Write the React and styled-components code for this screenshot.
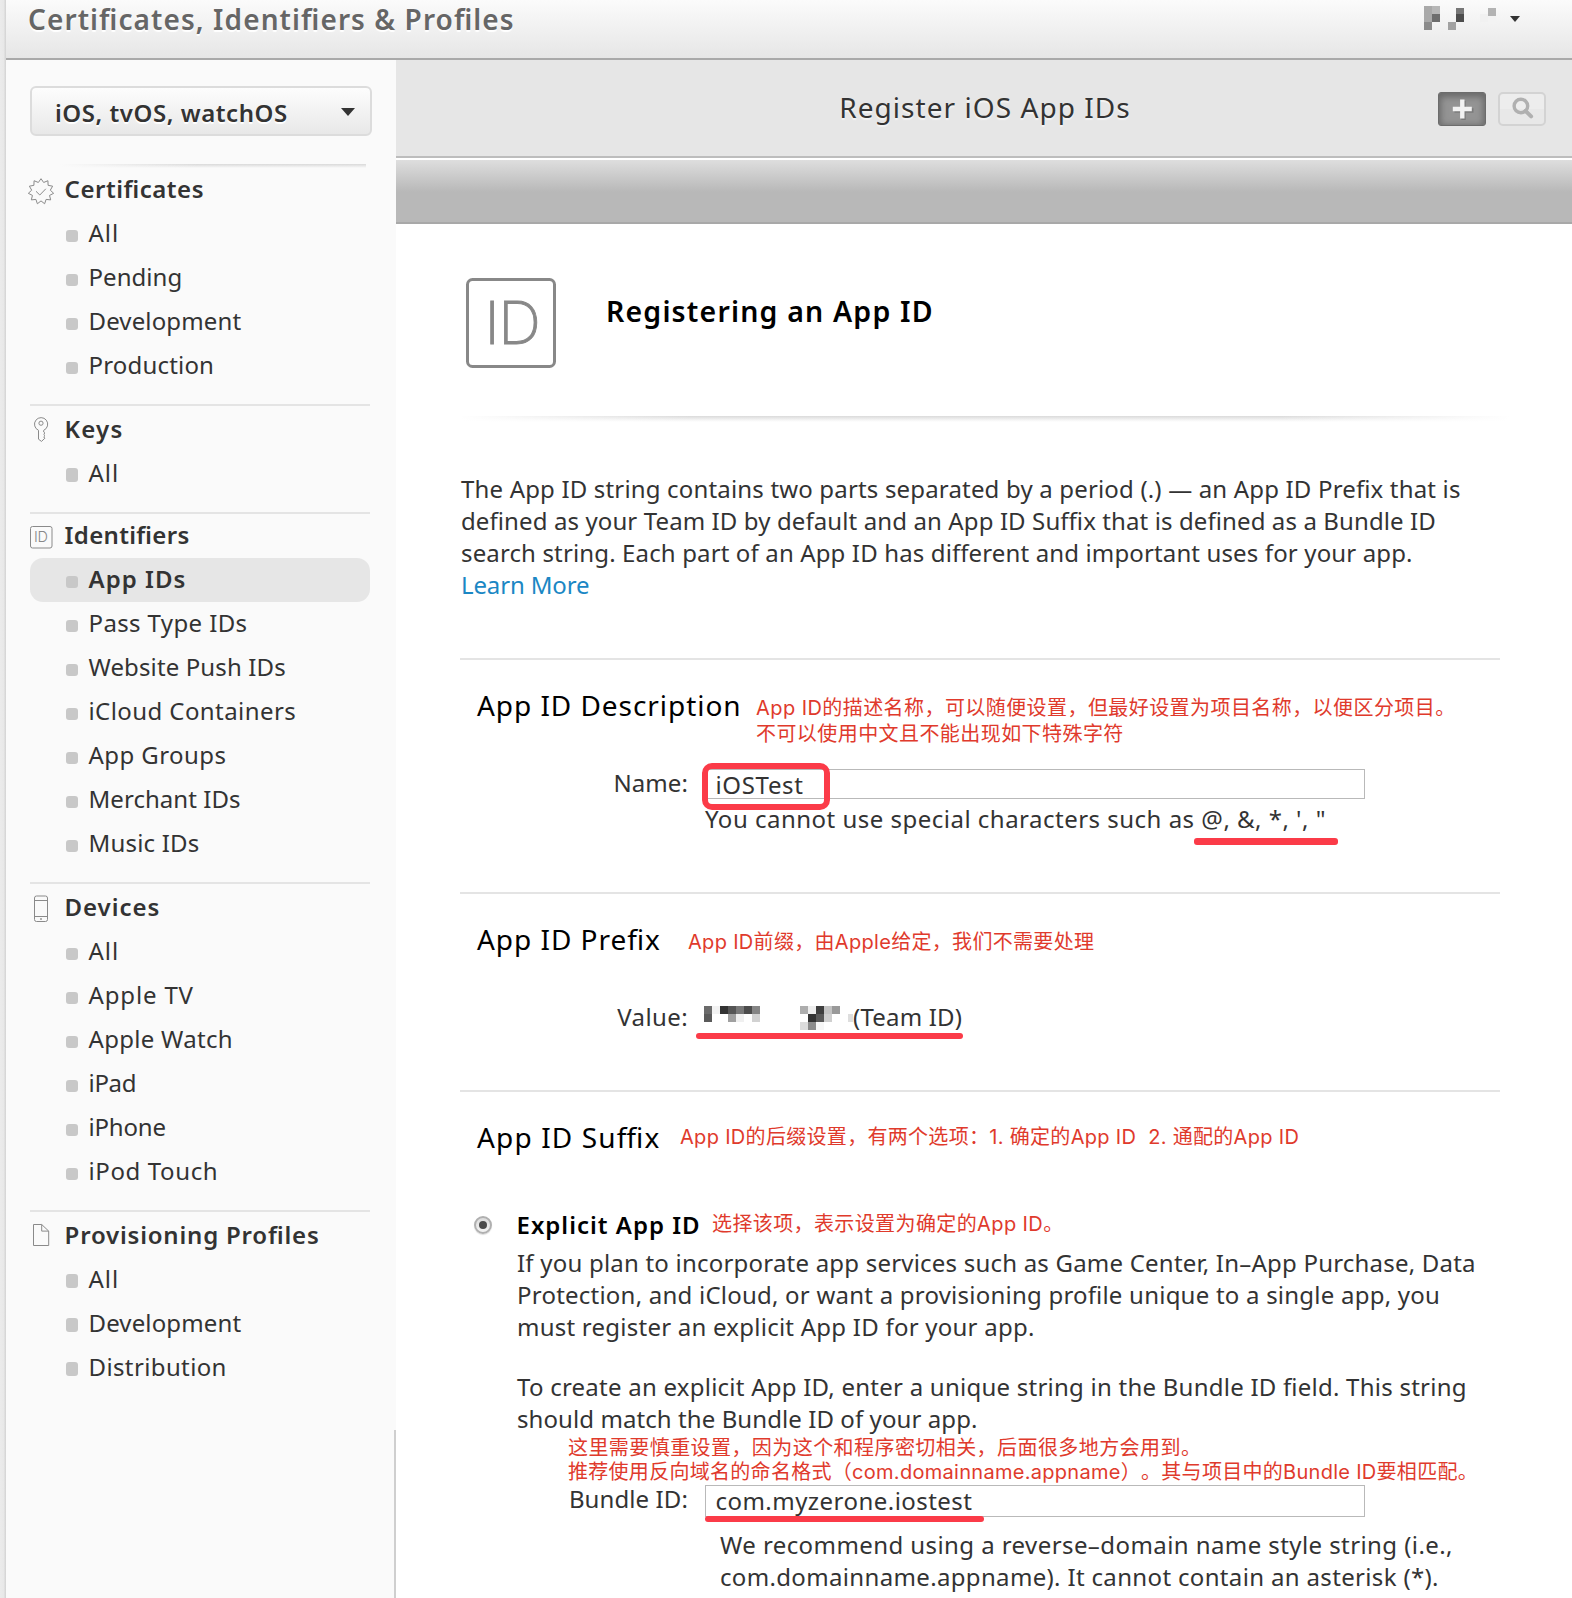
import React from 'react';
import styled, { createGlobalStyle } from 'styled-components';

const GlobalStyle = createGlobalStyle`
  *, *::before, *::after { box-sizing: border-box; }
  body {
    margin: 0;
    background: #fff;
    color: #333;
    font-family: "Noto Sans", "Open Sans", "Noto Sans CJK SC", sans-serif;
    font-size: 24px;
    font-feature-settings: "liga" 1;
  }
  h1, h2, h3, p, ul { margin: 0; padding: 0; font-weight: 400; }
  ul { list-style: none; }
`;

/* ---------- page frame ---------- */

const Page = styled.div`
  display: flex;
  height: 1598px;
  overflow: hidden;
`;

const PageEdge = styled.div`
  flex: 0 0 6px;
  background: linear-gradient(to right, #ebebeb 0, #e8e8e8 60%, #d2d2d2 100%);
`;

const Window = styled.div`
  flex: 1;
  min-width: 0;
  display: flex;
  flex-direction: column;
`;

const TopBar = styled.header`
  display: flex;
  justify-content: space-between;
  height: 60px;
  padding: 0 52px 0 22px;
  border-bottom: 2px solid #a9a9a9;
  background: linear-gradient(#fbfbfb, #e6e6e6);
`;

const TopTitle = styled.h1`
  font-size: 28px;
  font-weight: 600;
  line-height: 38px;
  letter-spacing: 1.08px;
  color: #666;
  text-shadow: 0 2px 1px #fff;
  white-space: nowrap;
`;

const Account = styled.div`
  display: flex;
  gap: 14px;
  padding-top: 6px;
`;

const AccountArrow = styled.svg`
  margin-top: 10px;
`;

const Body = styled.div`
  flex: 1;
  min-height: 0;
  display: flex;
`;

/* ---------- sidebar ---------- */

const Sidebar = styled.aside`
  flex: 0 0 390px;
  display: flex;
  flex-direction: column;
  background: #fafafa;
`;

const SidebarNav = styled.nav`
  height: 1370px;
  padding: 26px 24px 0;
`;

const SidebarTail = styled.div`
  flex: 1;
  border-right: 2px solid #cfcfcf;
`;

const PlatformSelect = styled.div`
  display: flex;
  justify-content: space-between;
  align-items: flex-start;
  height: 50px;
  padding: 0 15px 0 23px;
  border: 2px solid #dcdcdc;
  border-radius: 6px;
  background: linear-gradient(#fdfdfd, #e8e8e8);
  font-weight: 600;
  line-height: 49px;
  letter-spacing: 0.55px;
  text-shadow: 0 2px 1px #fff;
`;

const SelectArrow = styled.svg`
  margin-top: 20px;
`;

const FadeRule = styled.div`
  height: 4px;
  margin: 28px 6px 0 30px;
  background: linear-gradient(to right, #fafafa, rgba(250, 250, 250, 0) 45%),
    linear-gradient(#d9d9d9, #fafafa);
`;

const NavSection = styled.section`
  width: 340px;
  padding-top: ${(p) => p.$top}px;
  padding-bottom: 16px;
  border-top: ${(p) => (p.$ruled ? '2px solid #e4e4e4' : 'none')};
`;

const NavHeading = styled.h2`
  display: flex;
  align-items: flex-start;
  height: 44px;
  margin-left: -3px;
  font-size: 24px;
  font-weight: 600;
  line-height: 41px;
  letter-spacing: ${(p) => p.$track}px;
  white-space: nowrap;
`;

const NavIcon = styled.span`
  display: flex;
  flex: 0 0 37.6px;
  height: 28px;
  margin-top: 9px;
`;

const NavItem = styled.li`
  display: flex;
  align-items: flex-start;
  height: 44px;
  padding-left: 36px;
  border-radius: 13px;
  background: ${(p) => (p.$active ? '#e6e6e6' : 'transparent')};
  font-weight: ${(p) => (p.$active ? 600 : 400)};
  line-height: 41px;
  letter-spacing: ${(p) => p.$track}px;
  white-space: nowrap;
`;

const Bullet = styled.span`
  flex: 0 0 12px;
  height: ${(p) => (p.$tall ? 14 : 12)}px;
  margin: ${(p) => (p.$tall ? 16 : 18)}px 10.5px 0 0;
  border-radius: 3px;
  background: #c8c8c8;
`;

/* ---------- main column ---------- */

const Main = styled.main`
  flex: 1;
  min-width: 0;
`;

const SubHeader = styled.div`
  display: grid;
  grid-template-columns: 1fr auto 1fr;
  height: 98px;
  padding: 0 26px;
  border-bottom: 2px solid #bdbdbd;
  background: #e6e6e6;
`;

const SubTitle = styled.h2`
  grid-column: 2;
  padding-left: 2px;
  font-size: 28px;
  line-height: 94px;
  letter-spacing: 1.05px;
  text-shadow: 0 2px 1px #f4f4f4;
`;

const Tools = styled.div`
  display: flex;
  justify-content: flex-end;
  gap: 12px;
  padding-top: 32px;
`;

const ToolButton = styled.span`
  display: flex;
  width: 48px;
  height: 34px;
  border-radius: ${(p) => (p.$pressed ? 3 : 5)}px;
  border: ${(p) => (p.$pressed ? '1px solid #6c6c6c' : '2px solid #d3d3d3')};
  background: ${(p) =>
    p.$pressed ? '#949494' : 'linear-gradient(#ededed 50%, #e8e8e8 50%)'};
  box-shadow: ${(p) => (p.$pressed ? 'inset 0 2px 6px 2px #6a6a6a' : 'none')};
`;

const Band = styled.div`
  height: 66px;
  border-top: 2px solid #fff;
  border-bottom: 2px solid #a8a8a8;
  background: linear-gradient(#dedede 0, #b8b8b8 32px);
`;

const Content = styled.div`
  width: 1104px;
  padding: 54px 0 0 64px;
`;

const Hero = styled.div`
  display: flex;
  gap: 50px;
  padding-left: 6px;
`;

const HeroTitle = styled.h3`
  margin-top: 13px;
  color: #000;
  font-size: 28.5px;
  font-weight: 600;
  line-height: 40px;
  letter-spacing: 1.18px;
`;

const HeroShadow = styled.div`
  height: 6px;
  margin: 48px -10px 0 0;
  background: linear-gradient(to right, #fff, rgba(255, 255, 255, 0) 22%, rgba(255, 255, 255, 0) 78%, #fff),
    linear-gradient(#dadada, #f6f6f6 70%, #fff);
`;

const Paragraph = styled.p`
  margin-top: ${(p) => p.$top}px;
  padding-left: ${(p) => p.$indent || 0}px;
  line-height: 32px;
`;

const Line = styled.span`
  display: block;
  letter-spacing: ${(p) => p.$track}px;
  white-space: nowrap;
`;

const LinkLine = styled(Line)`
  color: #1b87c4;
`;

const Section = styled.section`
  margin-top: ${(p) => p.$top || 0}px;
  padding: 25px 0 ${(p) => p.$bottom || 0}px;
  border-top: 2px solid #e4e4e4;
`;

const SectionHead = styled.div`
  display: flex;
  align-items: flex-start;
  padding-left: 17px;
`;

const SectionTitle = styled.h3`
  flex: 0 0 ${(p) => p.$width}px;
  color: #000;
  font-size: 28px;
  line-height: 40px;
  letter-spacing: ${(p) => p.$track}px;
  white-space: nowrap;
`;

const Note = styled.div`
  margin: ${(p) => p.$top || 0}px 0 ${(p) => -(p.$pull || 0)}px ${(p) => p.$left || 0}px;
  color: #e03a2c;
  font-family: Inter, "Noto Sans CJK SC", sans-serif;
  font-size: 20px;
  line-height: ${(p) => p.$leading || 26}px;
  text-spacing-trim: space-all;
`;

const FieldRow = styled.div`
  display: grid;
  grid-template-columns: ${(p) => p.$label}px 660px;
  column-gap: 17px;
  margin-top: ${(p) => p.$top}px;
`;

const Label = styled.label`
  text-align: right;
  line-height: 27px;
  letter-spacing: ${(p) => p.$track}px;
  white-space: nowrap;
`;

const Field = styled.div`
  position: relative;
`;

const Input = styled.input`
  display: block;
  width: 660px;
  height: ${(p) => p.$height}px;
  padding: 0 9.5px ${(p) => p.$lift || 0}px;
  border: 1px solid #b9b9b9;
  border-radius: 0;
  background: #fff;
  color: #333;
  font: inherit;
  letter-spacing: ${(p) => p.$track}px;
  outline: none;
`;

const Help = styled.div`
  margin: ${(p) => p.$top}px 0 0 ${(p) => p.$left || 0}px;
  line-height: 32px;
`;

const Value = styled.div`
  position: relative;
  display: flex;
  margin-left: -1px;
  line-height: 27px;
  letter-spacing: 0.2px;
`;

const ValueMask = styled.svg`
  margin-top: 3px;
`;

const RedFrame = styled.div`
  position: absolute;
  left: -3px;
  top: -6px;
  width: 128px;
  height: 47px;
  border: 6px solid #fb3b48;
  border-radius: 10px;
`;

const RedLine = styled.div`
  position: absolute;
  left: ${(p) => p.$x}px;
  top: ${(p) => p.$y}px;
  width: ${(p) => p.$w}px;
  height: ${(p) => p.$h || 6}px;
  border-radius: 3px;
  background: #fb3b48;
`;

const Option = styled.div`
  display: grid;
  grid-template-columns: 43px 1fr;
  margin-top: 52px;
  padding-left: 14px;
`;

const Radio = styled.span`
  display: flex;
  align-items: center;
  justify-content: center;
  width: 18px;
  height: 18px;
  margin-top: 7px;
  border: 2px solid #b0b0b0;
  border-radius: 50%;
  background: linear-gradient(#dcdcdc, #f4f4f4);
  box-shadow: 0 1px 1px #ddd;

  &::after {
    content: '';
    width: 8px;
    height: 8px;
    border-radius: 50%;
    background: #4c4c4c;
  }
`;

const OptionHead = styled.div`
  display: flex;
  align-items: flex-start;
`;

const OptionTitle = styled.h3`
  flex: 0 0 195.5px;
  margin-left: -0.5px;
  color: #000;
  font-size: 24px;
  font-weight: 600;
  line-height: 32px;
  letter-spacing: 1px;
  white-space: nowrap;
`;

/* ---------- drawings ---------- */

const IconText = styled.text`
  font-family: Inter, sans-serif;
  font-weight: ${(p) => p.$weight};
  font-size: ${(p) => p.$size}px;
  letter-spacing: ${(p) => p.$track}px;
  fill: #888;
  stroke: #888;
  stroke-width: ${(p) => p.$edge || 0}px;
`;

const sealPoints = Array.from({ length: 22 }, (_, i) => {
  const r = i % 2 ? 9.4 : 12.8;
  const a = (Math.PI * i) / 11 - Math.PI / 2;
  return `${(14 + r * Math.cos(a)).toFixed(2)},${(14.5 + r * Math.sin(a)).toFixed(2)}`;
}).join(' ');

const stroke = { fill: 'none', stroke: '#8a8a8a', strokeWidth: 1 };

const icons = {
  seal: (
    <svg width="28" height="28">
      <polygon points={sealPoints} {...stroke} />
      <path d="M9 14.3l3.8 3.7 6-6.2" {...stroke} />
    </svg>
  ),
  key: (
    <svg width="28" height="28">
      <path
        d="M11.5 13.3A6.6 6.6 0 1 1 16.7 13.3V15l1.3 1.2-1.3 1.2 1.3 1.3-1.3 1.2 1.2 1.3-3.4 3.2-3-2.2z"
        {...stroke}
      />
      <circle cx="14" cy="6.2" r="2.1" {...stroke} />
    </svg>
  ),
  id: (
    <svg width="28" height="28">
      <rect x="3.5" y="3.5" width="21.5" height="21.5" rx="2" {...stroke} />
      <IconText x="7" y="19.4" $weight={300} $size={14.5} $track={-0.4}>ID</IconText>
    </svg>
  ),
  phone: (
    <svg width="28" height="28">
      <rect x="7.5" y="1" width="13" height="25.5" rx="2" {...stroke} />
      <path d="M7.5 5.5h13M7.5 21.5h13" {...stroke} />
      <rect x="13.2" y="23.2" width="1.6" height="1.6" fill="#8a8a8a" />
    </svg>
  ),
  file: (
    <svg width="28" height="28">
      <path d="M6.5 1.5h8.2l7 6.6v14.4h-15.2zM14.7 1.5v6.6h7" {...stroke} />
    </svg>
  ),
};

const Mosaic = ({ cells }) =>
  cells.map(([x, y, fill]) => (
    <rect key={`${x}-${y}`} x={x * 8} y={y * 8} width="8" height="8" fill={fill} />
  ));

const accountCells = [
  [0, 0, '#a9a9a9'], [1, 0, '#b7b7b7'], [0, 1, '#a9a9a9'], [1, 1, '#6d6d6d'],
  [0, 2, '#8b8b8b'], [4, 0.25, '#777'], [4, 1, '#4d4d4d'], [3, 2, '#a2a2a2'],
  [8, 0.25, '#b3b3b3'], [7, 1, '#f1f1f1'], [8, 1.25, '#f3f3f3'],
];

const teamCells = [
  [0, 0, '#6b6b6b'], [0, 1, '#5a5a5a'], [1, 0, '#f2f2f2'], [2, 0, '#333'],
  [3, 0, '#555'], [3, 1, '#a0a0a0'], [4, 0, '#787878'], [4, 1, '#f0f0f0'],
  [5, 0, '#4c4c4c'], [6, 0, '#858585'], [6, 1, '#d2d2d2'], [12, 0, '#adadad'],
  [12, 2, '#dcdcdc'], [13, 0, '#ededed'], [13, 1, '#333'], [13, 2, '#8c8c8c'],
  [14, 0, '#3e3e3e'], [14, 1, '#585858'], [14, 2, '#f6f6f6'], [15, 0, '#c3c3c3'],
  [15, 1, '#cfcfcf'], [16, 0, '#999'], [18, 1, '#dedede'],
];

/* ---------- data ---------- */

const sections = [
  {
    title: 'Certificates', icon: 'seal', track: 0.52, top: 0,
    items: [['All', 1.03], ['Pending', 0.05], ['Development', 0.14], ['Production', 0.18]],
  },
  { title: 'Keys', icon: 'key', track: 1.2, top: 2, ruled: true, tall: true, items: [['All', 1.03]] },
  {
    title: 'Identifiers', icon: 'id', track: 0.32, top: 0, ruled: true,
    items: [
      ['App IDs', 1.02], ['Pass Type IDs', 0.38], ['Website Push IDs', 0.12],
      ['iCloud Containers', 0.42], ['App Groups', 0.43], ['Merchant IDs', 0.05], ['Music IDs', 0.2],
    ],
  },
  {
    title: 'Devices', icon: 'phone', track: 0.95, top: 2, ruled: true,
    items: [
      ['All', 1.03], ['Apple TV', 0.85], ['Apple Watch', 0.3], ['iPad', -0.3],
      ['iPhone', -0.2], ['iPod Touch', 0.62],
    ],
  },
  {
    title: 'Provisioning Profiles', icon: 'file', track: 0.8, top: 2, ruled: true, tall: true,
    items: [['All', 1.03], ['Development', 0.14], ['Distribution', 0.38]],
  },
];

const Lines = ({ lines }) =>
  lines.map(([text, track]) => (
    <Line key={text} $track={track}>{text}</Line>
  ));

export default function App() {
  return (
    <Page>
      <GlobalStyle />
      <PageEdge />
      <Window>
        <TopBar>
          <TopTitle>Certificates, Identifiers &amp; Profiles</TopTitle>
          <Account>
            <svg width="72" height="24"><Mosaic cells={accountCells} /></svg>
            <AccountArrow width="10" height="6"><path d="M0 0h10L5 6z" fill="#333" /></AccountArrow>
          </Account>
        </TopBar>
        <Body>
          <Sidebar>
            <SidebarNav>
              <PlatformSelect>
                iOS, tvOS, watchOS
                <SelectArrow width="14" height="8"><path d="M0 0h14L7 8z" fill="#333" /></SelectArrow>
              </PlatformSelect>
              <FadeRule />
              {sections.map((s) => (
                <NavSection key={s.title} $top={s.top} $ruled={s.ruled}>
                  <NavHeading $track={s.track}>
                    <NavIcon>{icons[s.icon]}</NavIcon>
                    {s.title}
                  </NavHeading>
                  <ul>
                    {s.items.map(([name, track]) => (
                      <NavItem key={name} $track={track} $active={name === 'App IDs'}>
                        <Bullet $tall={s.tall} />
                        {name}
                      </NavItem>
                    ))}
                  </ul>
                </NavSection>
              ))}
            </SidebarNav>
            <SidebarTail />
          </Sidebar>
          <Main>
            <SubHeader>
              <SubTitle>Register iOS App IDs</SubTitle>
              <Tools>
                <ToolButton $pressed>
                  <svg width="46" height="32">
                    <path d="M24.5 8v19M15.5 17.5h19" stroke="#555" strokeWidth="4.4" opacity=".4" />
                    <path d="M23.3 6.5v19M13.8 16h19" stroke="#f2f2f2" strokeWidth="4.4" />
                  </svg>
                </ToolButton>
                <ToolButton>
                  <svg width="44" height="30">
                    <circle cx="20.9" cy="12" r="6.8" fill="none" stroke="#b0b0b0" strokeWidth="3.4" />
                    <path d="M25.5 16.8l5.6 5.6" stroke="#b0b0b0" strokeWidth="4" strokeLinecap="round" />
                  </svg>
                </ToolButton>
              </Tools>
            </SubHeader>
            <Band />
            <Content>
              <Hero>
                <svg width="90" height="90">
                  <rect x="1.5" y="1.5" width="87" height="87" rx="5" fill="none" stroke="#888" strokeWidth="3" />
                  <IconText x="18.4" y="66.4" $weight={200} $size={59.4} $track={-1.4} $edge={0.9}>ID</IconText>
                </svg>
                <HeroTitle>Registering an App ID</HeroTitle>
              </Hero>
              <HeroShadow />
              <Paragraph $top={51} $indent={1}>
                <Lines
                  lines={[
                    ['The App ID string contains two parts separated by a period (.) — an App ID Prefix that is', 0.17],
                    ['defined as your Team ID by default and an App ID Suffix that is defined as a Bundle ID', 0.11],
                    ['search string. Each part of an App ID has different and important uses for your app.', 0.135],
                  ]}
                />
                <LinkLine $track={-0.14}>Learn More</LinkLine>
              </Paragraph>

              <Section $top={57} $bottom={57}>
                <SectionHead>
                  <SectionTitle $width={279} $track={0.95}>App ID Description</SectionTitle>
                  <Note $top={10} $pull={1}>
                    <Line $track={0.43}>App ID的描述名称，可以随便设置，但最好设置为项目名称，以便区分项目。</Line>
                    <Line $track={0.43}>不可以使用中文且不能出现如下特殊字符</Line>
                  </Note>
                </SectionHead>
                <FieldRow $label={228} $top={23}>
                  <Label $track={0.1}>Name:</Label>
                  <Field>
                    <Input $height={30} $track={0.65} defaultValue="iOSTest" />
                    <Help $top={4}>
                      <Line $track={0.49}>You cannot use special characters such as @, &amp;, *, ', "</Line>
                    </Help>
                    <RedFrame />
                    <RedLine $x={489} $y={69} $w={144} $h={7} />
                  </Field>
                </FieldRow>
              </Section>

              <Section $bottom={60}>
                <SectionHead>
                  <SectionTitle $width={211} $track={0.97}>App ID Prefix</SectionTitle>
                  <Note $top={10}>
                    <Line $track={0.31}>App ID前缀，由Apple给定，我们不需要处理</Line>
                  </Note>
                </SectionHead>
                <FieldRow $label={228} $top={44}>
                  <Label $track={0.4}>Value:</Label>
                  <Value>
                    <ValueMask width="149" height="24"><Mosaic cells={teamCells} /></ValueMask>
                    (Team ID)
                    <RedLine $x={-8} $y={30} $w={267} />
                  </Value>
                </FieldRow>
              </Section>

              <Section>
                <SectionHead>
                  <SectionTitle $width={203} $track={1.14}>App ID Suffix</SectionTitle>
                  <Note $top={7}>
                    <Line $track={0.31}>App ID的后缀设置，有两个选项：1. 确定的App ID&nbsp; 2. 通配的App ID</Line>
                  </Note>
                </SectionHead>
                <Option>
                  <Radio />
                  <div>
                    <OptionHead>
                      <OptionTitle>Explicit App ID</OptionTitle>
                      <Note $top={2}>
                        <Line $track={0.39}>选择该项，表示设置为确定的App ID。</Line>
                      </Note>
                    </OptionHead>
                    <Paragraph $top={6}>
                      <Lines
                        lines={[
                          ['If you plan to incorporate app services such as Game Center, In–App Purchase, Data', 0.21],
                          ['Protection, and iCloud, or want a provisioning profile unique to a single app, you', 0.225],
                          ['must register an explicit App ID for your app.', 0.24],
                        ]}
                      />
                    </Paragraph>
                    <Paragraph $top={28}>
                      <Lines
                        lines={[
                          ['To create an explicit App ID, enter a unique string in the Bundle ID field. This string', 0.24],
                          ['should match the Bundle ID of your app.', 0.08],
                        ]}
                      />
                    </Paragraph>
                    <Note $leading={24} $left={51} $top={1} $pull={1}>
                      <Line $track={0.43}>这里需要慎重设置，因为这个和程序密切相关，后面很多地方会用到。</Line>
                      <Line $track={0.29}>推荐使用反向域名的命名格式（com.domainname.appname）。其与项目中的Bundle ID要相匹配。</Line>
                    </Note>
                    <FieldRow $label={171} $top={2}>
                      <Label $track={0.1}>Bundle ID:</Label>
                      <Field>
                        <Input $height={32} $lift={1} $track={0.46} defaultValue="com.myzerone.iostest" />
                        <Help $top={12} $left={15}>
                          <Lines
                            lines={[
                              ['We recommend using a reverse–domain name style string (i.e.,', 0.42],
                              ['com.domainname.appname). It cannot contain an asterisk (*).', 0.34],
                            ]}
                          />
                        </Help>
                        <RedLine $x={0} $y={31} $w={279} />
                      </Field>
                    </FieldRow>
                  </div>
                </Option>
              </Section>
            </Content>
          </Main>
        </Body>
      </Window>
    </Page>
  );
}
